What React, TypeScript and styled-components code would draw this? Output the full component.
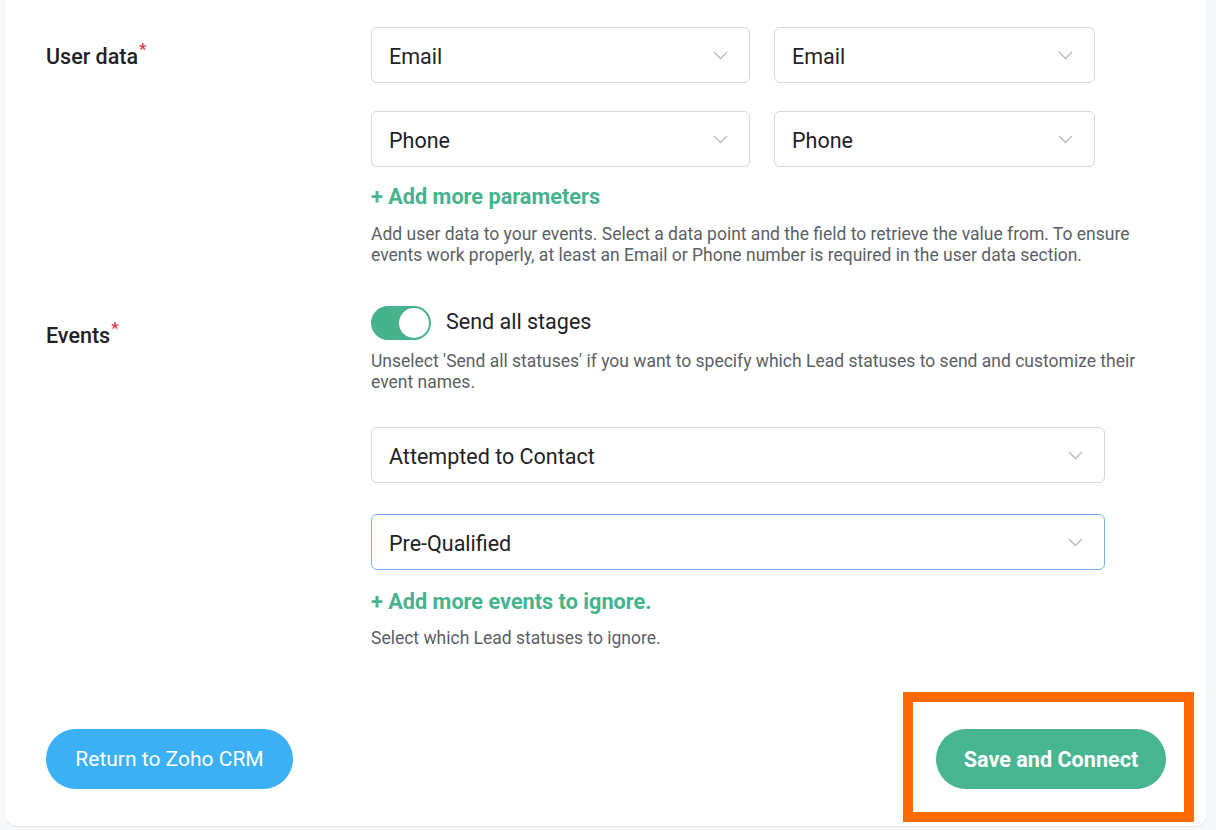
import React from "react";
import styled, { createGlobalStyle } from "styled-components";

const GlobalStyle = createGlobalStyle`
  html, body {
    margin: 0;
    padding: 0;
    background: #f6f7f9;
    overflow: hidden;
  }
  body {
    font-family: Roboto, "Noto Sans", Arial, sans-serif;
    color: #1f2226;
  }
  * { box-sizing: border-box; }
`;

const Page = styled.div`
  height: 830px;
  padding: 0 10px 0 6px;
`;

const Card = styled.div`
  background: #ffffff;
  border-radius: 0 0 10px 10px;
  padding: 27px 40px 37px;
  box-shadow: 0 1px 0 #e2e3e5;
`;

const Section = styled.div<{ $gapTop?: number }>`
  display: grid;
  grid-template-columns: 325px 1fr;
  margin-top: ${(p) => p.$gapTop ?? 0}px;
`;

const Label = styled.div`
  font-size: 21.5px;
  font-weight: 500;
  line-height: 56px;
  padding-top: 2px;
  color: #1f2226;
  white-space: nowrap;
`;

const Required = styled.span`
  color: #e2334a;
  font-size: 17px;
  position: relative;
  top: -9px;
  margin-left: 1px;
`;

const Controls = styled.div`
  display: flex;
  flex-direction: column;
  align-items: flex-start;
`;

const Stack = styled.div<{ $gap: number; $mt?: number }>`
  display: flex;
  flex-direction: column;
  gap: ${(p) => p.$gap}px;
  margin-top: ${(p) => p.$mt ?? 0}px;
`;

const SelectRow = styled.div`
  display: flex;
  gap: 24px;
`;

const SelectBox = styled.div<{ $w: number; $focused?: boolean }>`
  width: ${(p) => p.$w}px;
  height: 56px;
  border: 1px solid ${(p) => (p.$focused ? "#74aef4" : "#d3d6db")};
  border-radius: 6px;
  background: #fff;
  display: flex;
  align-items: center;
  justify-content: space-between;
  padding: 0 21px 0 17px;
  font-size: 21.5px;
  color: #1f2226;
`;

const SelectValue = styled.span`
  padding-top: 3px;
`;

const AddLink = styled.div<{ $mt: number }>`
  margin-top: ${(p) => p.$mt}px;
  font-size: 21.7px;
  font-weight: 700;
  line-height: 28px;
  padding-top: 2px;
  color: #46b38d;
  cursor: pointer;
`;

const Help = styled.p<{ $mt: number }>`
  margin: ${(p) => p.$mt}px 0 0;
  padding-top: 1px;
  max-width: 775px;
  font-size: 17.5px;
  line-height: 21px;
  color: #5b5f65;
`;

const ToggleRow = styled.div`
  display: flex;
  align-items: center;
  gap: 15px;
  height: 34px;
  font-size: 21.5px;
`;

const ToggleText = styled.span`
  padding-bottom: 3px;
`;

const Toggle = styled.div<{ $on: boolean }>`
  width: 60px;
  height: 34px;
  border-radius: 17px;
  background: ${(p) => (p.$on ? "#46b38d" : "#cfd3d8")};
  display: flex;
  align-items: center;
  justify-content: ${(p) => (p.$on ? "flex-end" : "flex-start")};
  padding: 2px;
`;

const Knob = styled.div`
  width: 30px;
  height: 30px;
  border-radius: 50%;
  background: #fff;
`;

const Footer = styled.div`
  margin-top: 80.5px;
  display: flex;
  justify-content: space-between;
  align-items: center;
`;

const PillButton = styled.button<{ $variant: "blue" | "green"; $w: number }>`
  width: ${(p) => p.$w}px;
  height: 60px;
  border: none;
  border-radius: 30px;
  background: ${(p) => (p.$variant === "blue" ? "#3bb0f5" : "#47b58f")};
  color: #fff;
  font-family: Roboto, "Noto Sans", Arial, sans-serif;
  font-size: ${(p) => (p.$variant === "green" ? 21.6 : 21)}px;
  font-weight: ${(p) => (p.$variant === "green" ? 700 : 400)};
  cursor: pointer;
`;

const Highlighted = styled.div`
  position: relative;
`;

const Annotation = styled.div`
  position: absolute;
  left: -33px;
  top: -37px;
  right: -28px;
  bottom: -33px;
  border: 10px solid #ff6a00;
  pointer-events: none;
`;

const Chevron = () => (
  <svg width="15" height="9" viewBox="0 0 15 9" fill="none">
    <path d="M1 1l6.5 6.5L14 1" stroke="#b7bbc2" strokeWidth="1.4" />
  </svg>
);

const Select = ({ value, w, focused }: { value: string; w: number; focused?: boolean }) => (
  <SelectBox $w={w} $focused={focused}>
    <SelectValue>{value}</SelectValue>
    <Chevron />
  </SelectBox>
);

export default function App() {
  return (
    <>
      <GlobalStyle />
      <Page>
        <Card>
          <Section>
            <Label>
              User data<Required>*</Required>
            </Label>
            <Controls>
              <Stack $gap={28}>
                <SelectRow>
                  <Select value="Email" w={379} />
                  <Select value="Email" w={321} />
                </SelectRow>
                <SelectRow>
                  <Select value="Phone" w={379} />
                  <Select value="Phone" w={321} />
                </SelectRow>
              </Stack>
              <AddLink $mt={14}>+ Add more parameters</AddLink>
              <Help $mt={11.5}>
                Add user data to your events. Select a data point and the field to retrieve the value from. To ensure
                events work properly, at least an Email or Phone number is required in the user data section.
              </Help>
            </Controls>
          </Section>

          <Section $gapTop={40.5}>
            <Label>
              Events<Required>*</Required>
            </Label>
            <Controls>
              <ToggleRow>
                <Toggle $on>
                  <Knob />
                </Toggle>
                <ToggleText>Send all stages</ToggleText>
              </ToggleRow>
              <Help $mt={9.5}>
                Unselect 'Send all statuses' if you want to specify which Lead statuses to send and customize their
                event names.
              </Help>
              <Stack $gap={31} $mt={34.5}>
                <Select value="Attempted to Contact" w={734} />
                <Select value="Pre-Qualified" w={734} focused />
              </Stack>
              <AddLink $mt={16}>+ Add more events to ignore.</AddLink>
              <Help $mt={10.5}>Select which Lead statuses to ignore.</Help>
            </Controls>
          </Section>

          <Footer>
            <PillButton $variant="blue" $w={247}>
              Return to Zoho CRM
            </PillButton>
            <Highlighted>
              <PillButton $variant="green" $w={230}>
                Save and Connect
              </PillButton>
              <Annotation />
            </Highlighted>
          </Footer>
        </Card>
      </Page>
    </>
  );
}
